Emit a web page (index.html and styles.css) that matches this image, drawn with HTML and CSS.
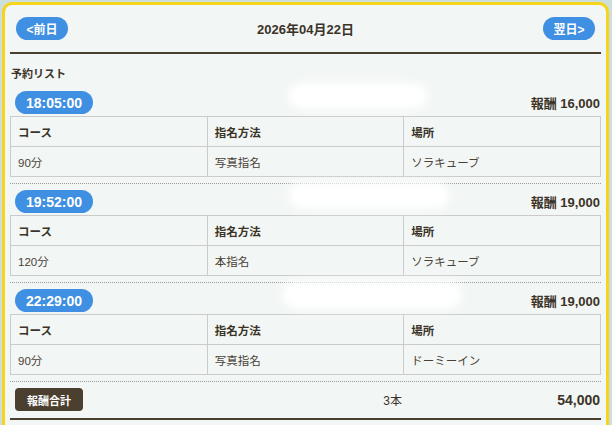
FILE: index.html
```html
<!DOCTYPE html>
<html lang="ja">
<head>
<meta charset="utf-8">
<link rel="stylesheet" href="styles.css">
</head>
<body>
<div class="card">
  <div class="header">
    <span class="nav-btn">&lt;前日</span>
    <span class="date">2026年04月22日</span>
    <span class="nav-btn">翌日&gt;</span>
  </div>
  <div class="rule"></div>
  <div class="list-title">予約リスト</div>

  <div class="block">
    <div class="blur blur-a"></div>
    <div class="block-head">
      <span class="time">18:05:00</span>
      <span class="reward">報酬 16,000</span>
    </div>
    <table class="info">
      <tr><th>コース</th><th>指名方法</th><th>場所</th></tr>
      <tr><td>90分</td><td>写真指名</td><td>ソラキューブ</td></tr>
    </table>
  </div>

  <div class="block">
    <div class="blur blur-b"></div>
    <div class="block-head">
      <span class="time">19:52:00</span>
      <span class="reward">報酬 19,000</span>
    </div>
    <table class="info">
      <tr><th>コース</th><th>指名方法</th><th>場所</th></tr>
      <tr><td>120分</td><td>本指名</td><td>ソラキューブ</td></tr>
    </table>
  </div>

  <div class="block">
    <div class="blur blur-c"></div>
    <div class="block-head">
      <span class="time">22:29:00</span>
      <span class="reward">報酬 19,000</span>
    </div>
    <table class="info">
      <tr><th>コース</th><th>指名方法</th><th>場所</th></tr>
      <tr><td>90分</td><td>写真指名</td><td>ドーミーイン</td></tr>
    </table>
  </div>

  <div class="total">
    <span class="total-label">報酬合計</span>
    <span class="total-count">3本</span>
    <span class="total-sum">54,000</span>
  </div>
  <div class="rule"></div>
</div>
</body>
</html>
```
FILE: styles.css
```css
html, body {
  margin: 0;
  padding: 0;
}
body {
  background: #cddfdb;
  font-family: "Liberation Sans", "Noto Sans CJK JP", sans-serif;
  color: #3b3327;
  width: 612px;
  height: 425px;
  overflow: hidden;
}
.card {
  margin: 2px 3px 0 2px;
  border: 3px solid #f6d41c;
  border-bottom: none;
  border-radius: 10px 10px 0 0;
  background: #f2f6f5;
  padding: 12px 5px 20px 5px;
  height: 430px;
  box-sizing: border-box;
}
.header {
  display: flex;
  align-items: center;
  justify-content: space-between;
  padding: 0 6px;
  height: 23px;
}
.nav-btn {
  display: flex;
  align-items: center;
  justify-content: center;
  width: 52px;
  height: 23px;
  border-radius: 12px;
  background: #3f8fe2;
  color: #fff;
  font-size: 12px;
  font-weight: bold;
}
.date {
  font-size: 13px;
  font-weight: bold;
}
.rule {
  height: 2px;
  background: #4b3f2f;
  margin-top: 12px;
}
.list-title {
  font-size: 11px;
  font-weight: bold;
  line-height: 16px;
  margin-top: 12px;
  padding-left: 1px;
}
.block {
  position: relative;
  padding: 9px 0 6px 0;
  border-bottom: 1px dotted #9a9a9a;
}
.block + .block {
  padding-top: 6px;
}
.block-head {
  display: flex;
  align-items: center;
  justify-content: space-between;
  height: 23px;
  padding: 0 1px 0 5px;
}
.time {
  display: flex;
  align-items: center;
  justify-content: center;
  width: 78px;
  height: 23px;
  border-radius: 12px;
  background: #3f8fe2;
  color: #fff;
  font-size: 14px;
  font-weight: bold;
}
.reward {
  font-size: 13px;
  font-weight: bold;
}
.info {
  width: 100%;
  margin-top: 2px;
  border-collapse: collapse;
  table-layout: fixed;
  font-size: 11.5px;
}
.info th, .info td {
  border: 1px solid #cbcbcb;
  height: 29px;
  padding: 0 7px;
  text-align: left;
  vertical-align: middle;
}
.info th {
  font-weight: bold;
}
.info td {
  font-weight: normal;
  color: #4a4236;
}
.blur {
  position: absolute;
  background: #ffffff;
  border-radius: 14px;
  filter: blur(5px);
  pointer-events: none;
}
.blur-a {
  left: 278px;
  top: 1px;
  width: 140px;
  height: 26px;
}
.blur-b {
  left: 278px;
  top: -2px;
  width: 162px;
  height: 27px;
}
.blur-c {
  left: 272px;
  top: -2px;
  width: 180px;
  height: 28px;
}
.total {
  display: grid;
  grid-template-columns: 1fr 1fr 1fr;
  align-items: center;
  margin-top: 6px;
  height: 23px;
  padding: 0 1px 0 5px;
}
.total-label {
  justify-self: start;
  display: flex;
  align-items: center;
  justify-content: center;
  width: 68px;
  height: 23px;
  border-radius: 4px;
  background: #4b3f2f;
  color: #fff;
  font-size: 11px;
  font-weight: bold;
}
.total-count {
  justify-self: end;
  font-size: 12px;
  margin-right: 3px;
}
.total-sum {
  justify-self: end;
  font-size: 14px;
  font-weight: bold;
}
.total + .rule {
  margin-top: 7px;
}
```
